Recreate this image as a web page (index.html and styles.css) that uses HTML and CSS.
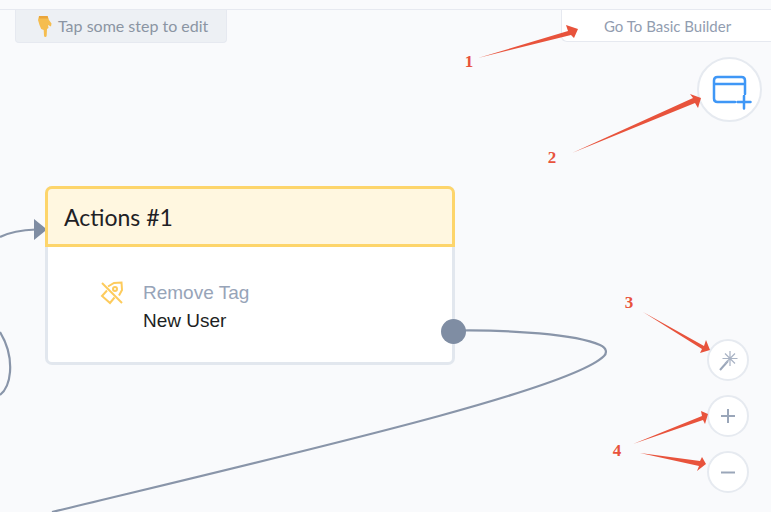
FILE: index.html
```html
<!DOCTYPE html>
<html lang="en">
<head>
    <meta charset="UTF-8">
    <meta name="viewport" content="width=device-width, initial-scale=1.0">
    <title>Flow Builder</title>
    <link rel="stylesheet" href="styles.css">
</head>
<body>
    <div class="topbar"></div>
    <div class="canvas">
        <div class="toolbar">
            <div class="hint">
                <svg class="hint-hand" width="16" height="22" viewBox="0 0 16 22">
                    <path d="M2 1h8.5l1.500 4 2.500 3.500-.5 3-3-1.500.5 3-1.500 1-.3 6.500q-.2 1.500-1.400 1.500t-1.300-1.500l-.3-5.500-2.500-1L2.500 10 1 5z" fill="#f5bd4f"/>
                    <path d="M2 1h8.500l.8 2.500H2.200z" fill="#eaa53a"/>
                </svg>
                <span class="hint-text">Tap some step to edit</span>
            </div>
            <div class="basic-link">Go To Basic Builder</div>
        </div>

        <svg class="wires" width="771" height="502" viewBox="0 10 771 502">
            <path d="M0 237C10 232 22 230 36 229.5" />
            <path d="M0 332C8 345 11 358 10 372C9 384 5 391 0 395" />
            <path d="M460 330.5C510 330 575 334 600 345C607 348 607 353 604 356C570 390 300 452 52 512" />
            <polygon class="wire-head" points="34,219 47,229.5 34,240" />
        </svg>

        <div class="node">
            <div class="node-head">Actions #1</div>
            <div class="node-body">
                <svg class="tag-icon" width="24" height="24" viewBox="0 0 24 24">
                    <path d="M8 5.500l6-3.500 7.500-.5.500 7.500-3 5.500M14.500 16.500L10 22 2 15l5-5.500" />
                    <circle cx="15" cy="8" r="2" />
                    <path d="M2 2l20 20" />
                </svg>
                <div class="node-text">
                    <div class="node-action">Remove Tag</div>
                    <div class="node-value">New User</div>
                </div>
            </div>
            <div class="node-port"></div>
        </div>

        <button class="round-btn add-step">
            <svg width="38" height="34" viewBox="0 0 38 34">
                <path d="M23 28H5.500Q2 28 2 24.500V6.500Q2 3 5.500 3H29.500Q33 3 33 6.500V20M2 10H33M32 22V34.500M25.500 28H38.500" />
            </svg>
        </button>
        <div class="tools">
            <button class="round-btn small">
                <svg width="22" height="22" viewBox="0 0 22 22">
                    <path class="wand" d="M3 21L11 12" />
                    <path d="M13 2V17M5.500 9.500H20.500M8 4.500L18 14.500M18 4.500L8 14.500" />
                </svg>
            </button>
            <button class="round-btn small">
                <svg width="16" height="16" viewBox="0 0 16 16"><path class="wand" d="M8 1V15M1 8H15" /></svg>
            </button>
            <button class="round-btn small">
                <svg width="16" height="16" viewBox="0 0 16 16"><path class="wand" d="M1 8.500H15" /></svg>
            </button>
        </div>

        <svg class="notes" width="771" height="502" viewBox="0 10 771 502">
            <polygon points="478,58 568,31 566,25 578,29 574,38 571,35" />
            <polygon points="572,153 693,98 690,94 701,98 698,108 695,103" />
            <polygon points="643,312 704,346 706,340 710,350 700,353 702,349" />
            <polygon points="633,444 702,416 701,411 708,414 705,424 703,420" />
            <polygon points="640,453 700,461 702,457 706,464 697,471 699,466" />
            <text x="469" y="67">1</text>
            <text x="552" y="163">2</text>
            <text x="629" y="308">3</text>
            <text x="617" y="456">4</text>
        </svg>
    </div>
</body>
</html>
```

FILE: styles.css
```css
* {
    margin: 0;
    padding: 0;
    box-sizing: border-box;
    font-family: 'Lato', 'Liberation Sans', sans-serif;
}

body {
    background: #f9fafc;
    height: 512px;
    overflow: hidden;
}

.topbar {
    height: 10px;
    border-bottom: 1px solid #e6e9f0;
}

.canvas {
    position: relative;
    height: 502px;
}

.toolbar {
    display: flex;
    justify-content: space-between;
    align-items: flex-start;
    padding-left: 15px;
}

.hint {
    width: 212px;
    height: 33px;
    display: flex;
    align-items: center;
    gap: 5px;
    padding-left: 21px;
    background: #edf0f4;
    border: 1px solid #e6e9f0;
    border-top: none;
    border-radius: 0 0 4px 4px;
    color: #8b95a3;
    font-size: 16px;
}

.hint-text {
    margin-bottom: 2px;
}

.hint-hand {
    flex-shrink: 0;
}

.basic-link {
    width: 210px;
    height: 32px;
    line-height: 32px;
    padding-left: 42px;
    background: white;
    border: 1px solid #e6e9f0;
    border-top: none;
    border-right: none;
    border-radius: 0 0 0 6px;
    color: #929db0;
    font-size: 15px;
}

.wires {
    position: absolute;
    top: 0;
    left: 0;
}

.wires path {
    fill: none;
    stroke: #8995a9;
    stroke-width: 2.2;
}

.wires .wire-head {
    fill: #7f8da3;
}

.node {
    position: absolute;
    left: 45px;
    top: 176px;
    width: 410px;
    height: 179px;
    background: white;
    border: 3px solid #e2e7ee;
    border-radius: 7px;
}

.node-head {
    height: 61px;
    margin: -3px -3px 0;
    padding-left: 16px;
    line-height: 56px;
    background: #fff7e0;
    border: 3px solid #fdd56b;
    border-radius: 7px 7px 0 0;
    color: #1e2125;
    font-size: 23px;
}

.node-body {
    display: flex;
    align-items: flex-start;
    gap: 19px;
    padding: 32px 0 0 52px;
}

.tag-icon {
    margin-top: 2px;
    flex-shrink: 0;
}

.tag-icon path,
.tag-icon circle {
    fill: none;
    stroke: #fdcb5c;
    stroke-width: 2;
}

.node-text {
    font-size: 19px;
    line-height: 28px;
}

.node-action,
.node-value {
    font-family: 'Liberation Sans', sans-serif;
}

.node-action {
    color: #97a4b8;
}

.node-value {
    color: #1d1f23;
}

.node-port {
    position: absolute;
    right: -14px;
    top: 130px;
    width: 25px;
    height: 25px;
    border-radius: 50%;
    background: #7f8da3;
}

.round-btn {
    display: flex;
    align-items: center;
    justify-content: center;
    background: white;
    border: 2px solid #e6eaf0;
    border-radius: 50%;
}

.round-btn path {
    fill: none;
}

.add-step {
    position: absolute;
    left: 697px;
    top: 47px;
    width: 65px;
    height: 65px;
}

.add-step svg {
    margin: 2px 0 0 2px;
    overflow: visible;
}

.add-step path {
    stroke: #3f97f6;
    stroke-width: 2.5;
    stroke-linecap: round;
}

.tools {
    position: absolute;
    left: 707px;
    top: 329px;
    display: flex;
    flex-direction: column;
    gap: 14px;
}

.round-btn.small {
    width: 42px;
    height: 42px;
}

.round-btn.small path {
    stroke: #a9b3c4;
    stroke-width: 1.2;
}

.round-btn.small path.wand {
    stroke: #9aa6b9;
    stroke-width: 2;
}

.notes {
    position: absolute;
    top: 0;
    left: 0;
    pointer-events: none;
}

.notes polygon {
    fill: #e8533c;
}

.notes text {
    fill: #e8533c;
    font-family: 'Liberation Serif', serif;
    font-size: 17px;
    font-weight: bold;
    text-anchor: middle;
}
```
